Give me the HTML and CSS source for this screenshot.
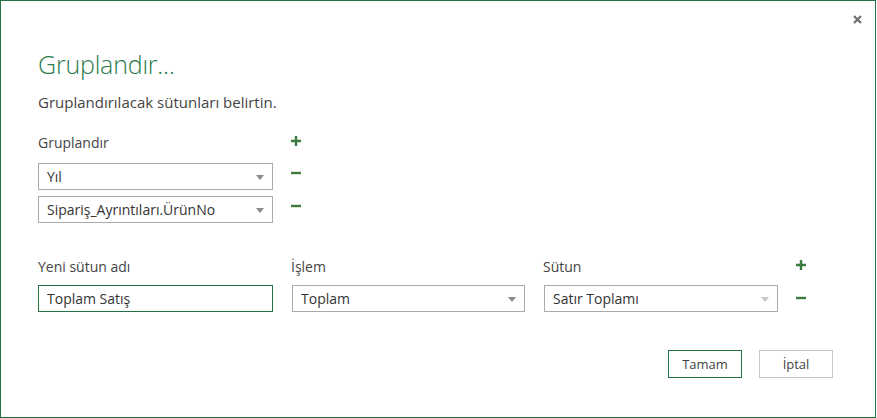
FILE: index.html
```html
<!DOCTYPE html>
<html lang="tr">
<head>
  <meta charset="UTF-8">
  <title>Gruplandır</title>
  <link rel="stylesheet" href="styles.css">
</head>
<body>

  <div class="dialog">
    <button class="close-btn" title="Kapat">
      <svg width="9" height="9" viewBox="0 0 9 9"><path d="M1 1 L8 8 M8 1 L1 8" stroke="#6f6f6f" stroke-width="2.2"/></svg>
    </button>

    <h1 class="title">Gruplandır...</h1>
    <p class="subtitle">Gruplandırılacak sütunları belirtin.</p>

    <div class="group-grid">
      <div class="label">Gruplandır</div>
      <button class="icon-btn add"><svg width="10" height="10" viewBox="0 0 10 10"><path d="M0 5 H10 M5 0 V10" stroke="#3d7a3d" stroke-width="2.4"/></svg></button>

      <div class="select">Yıl<span class="arrow"></span></div>
      <button class="icon-btn remove"><svg width="10" height="10" viewBox="0 0 10 10"><path d="M0 5 H10" stroke="#3d7a3d" stroke-width="2.4"/></svg></button>

      <div class="select">Sipariş_Ayrıntıları.ÜrünNo<span class="arrow"></span></div>
      <button class="icon-btn remove"><svg width="10" height="10" viewBox="0 0 10 10"><path d="M0 5 H10" stroke="#3d7a3d" stroke-width="2.4"/></svg></button>
    </div>

    <div class="agg-grid">
      <div class="label">Yeni sütun adı</div>
      <div class="label">İşlem</div>
      <div class="label">Sütun</div>
      <button class="icon-btn add"><svg width="10" height="10" viewBox="0 0 10 10"><path d="M0 5 H10 M5 0 V10" stroke="#3d7a3d" stroke-width="2.4"/></svg></button>

      <div class="text-input">Toplam Satış</div>
      <div class="select wide">Toplam<span class="arrow"></span></div>
      <div class="select wide">Satır Toplamı<span class="arrow faded"></span></div>
      <button class="icon-btn remove"><svg width="10" height="10" viewBox="0 0 10 10"><path d="M0 5 H10" stroke="#3d7a3d" stroke-width="2.4"/></svg></button>
    </div>

    <div class="actions">
      <button class="btn primary">Tamam</button>
      <button class="btn">İptal</button>
    </div>
  </div>

</body>
</html>
```

FILE: styles.css
```css
* {
  box-sizing: border-box;
}

body {
  margin: 0;
  font-family: "Open Sans", "Noto Sans", Arial, sans-serif;
  color: #444;
  background: white;
}

.dialog {
  position: relative;
  width: 876px;
  height: 418px;
  border: 1px solid #217346;
  padding: 0 0 0 37px;
}

.close-btn {
  position: absolute;
  top: 13px;
  right: 12px;
  width: 11px;
  height: 11px;
  padding: 1px;
  border: none;
  background: none;
  line-height: 0;
}

.title {
  margin: 0;
  padding-top: 46px;
  font-size: 25px;
  font-weight: 300;
  line-height: 34px;
  letter-spacing: -0.2px;
  color: #2b7a4b;
}

.subtitle {
  margin: 11px 0 0;
  font-size: 15px;
  line-height: 20px;
}

.label {
  font-size: 14px;
  line-height: 20px;
}

.icon-btn {
  border: none;
  background: none;
  padding: 0;
  width: 10px;
  height: 10px;
  line-height: 0;
}

/* Gruplandır section */
.group-grid {
  display: grid;
  grid-template-columns: 235px 10px;
  column-gap: 18px;
  row-gap: 6px;
  margin-top: 21px;
  align-items: start;
}

.group-grid .label {
  margin-bottom: 4px;
}

.group-grid .add {
  margin-top: 3px;
}

.group-grid .remove {
  margin-top: 5px;
}

.select,
.text-input {
  position: relative;
  height: 27px;
  border: 1px solid #ababab;
  padding: 0 8px;
  font-size: 14px;
  line-height: 25px;
  color: #333;
  white-space: nowrap;
}

.text-input {
  border-color: #217346;
}

.arrow {
  position: absolute;
  right: 8px;
  top: 11px;
  border-left: 4px solid transparent;
  border-right: 4px solid transparent;
  border-top: 5px solid #8a8a8a;
}

.arrow.faded {
  border-top-color: #c8c8c8;
}

/* aggregation section */
.agg-grid {
  display: grid;
  grid-template-columns: 235px 234px 235px 10px;
  column-gap: 18px;
  row-gap: 8px;
  margin-top: 34px;
  align-items: start;
}

.agg-grid .select {
  margin-left: 1px;
}

.agg-grid .add {
  margin-top: 3px;
}

.agg-grid .remove {
  margin-top: 8px;
}

.actions {
  display: flex;
  justify-content: flex-end;
  gap: 17px;
  margin-top: 38px;
  padding-right: 42px;
}

.btn {
  width: 74px;
  height: 28px;
  border: 1px solid #c6c6c6;
  background: white;
  font-family: inherit;
  font-size: 13px;
  color: #444;
}

.btn.primary {
  border-color: #217346;
}
```
